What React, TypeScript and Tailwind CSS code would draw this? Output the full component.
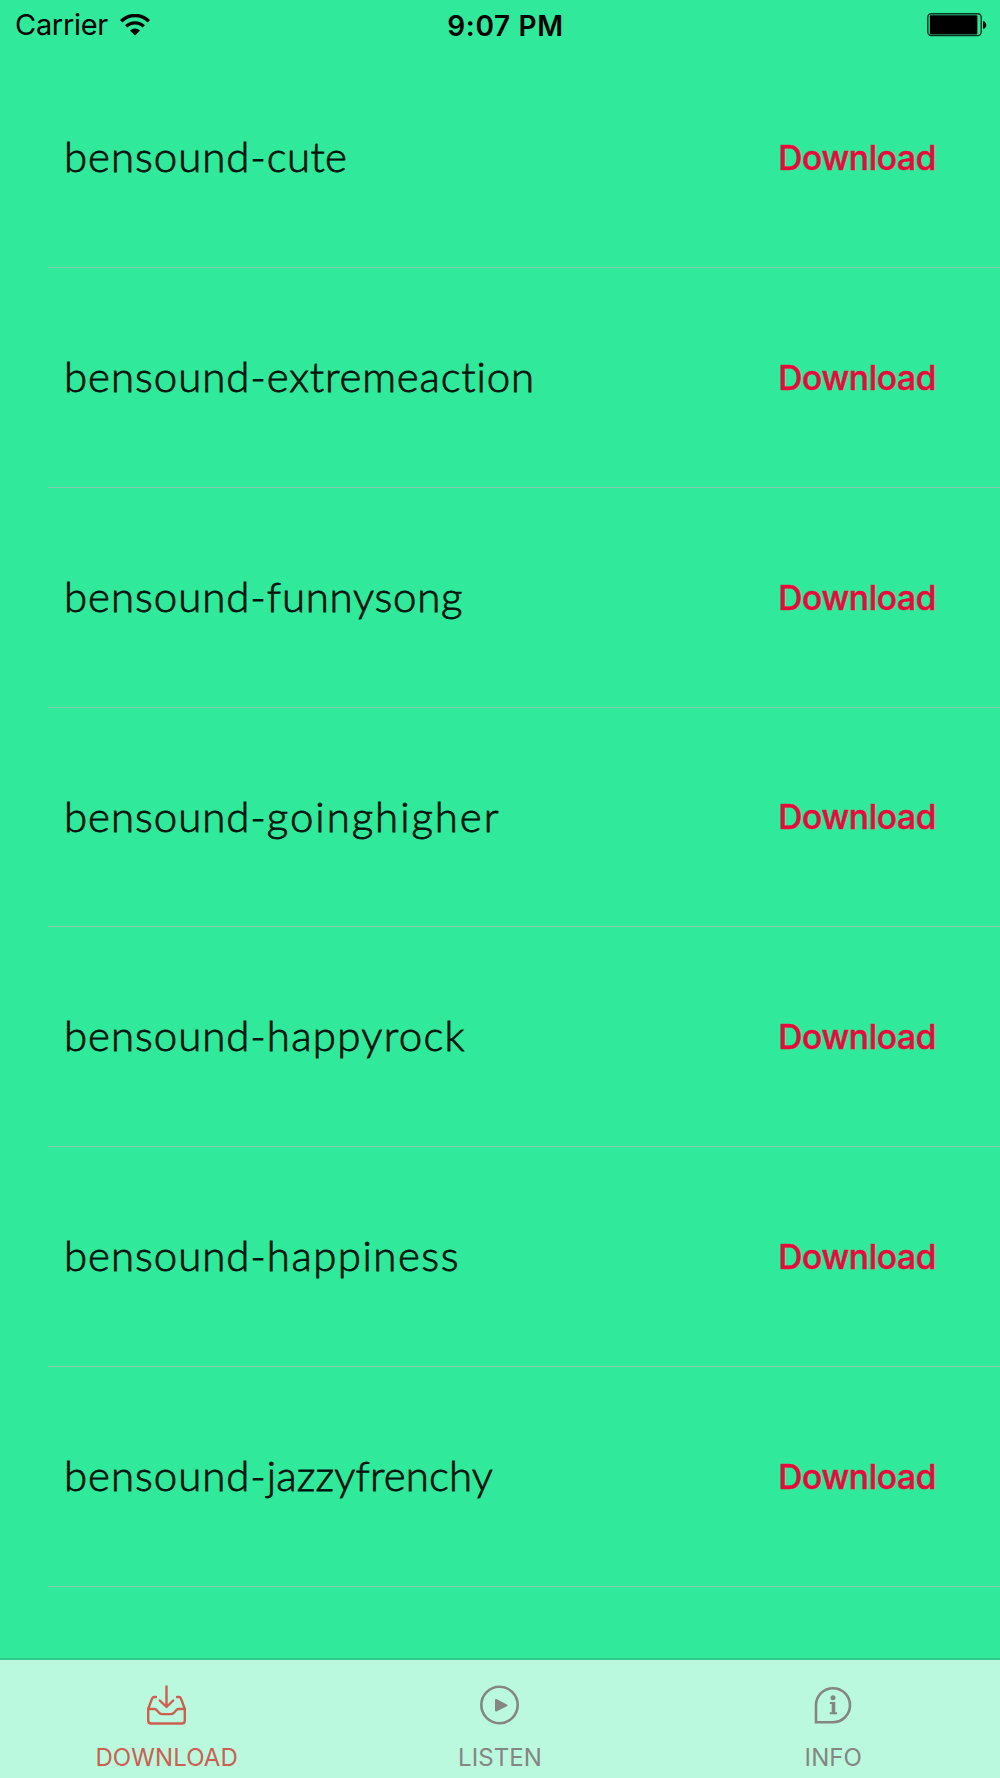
import React from 'react';

interface Song {
    title: string;
    spacing: string;
}

const songs: Song[] = [
    { title: 'cute', spacing: 'tracking-[0.35px]' },
    { title: 'extremeaction', spacing: 'tracking-[0.81px]' },
    { title: 'funnysong', spacing: 'tracking-[0.74px]' },
    { title: 'goinghigher', spacing: 'tracking-[1.95px]' },
    { title: 'happyrock', spacing: 'tracking-[1.3px]' },
    { title: 'happiness', spacing: 'tracking-[1.48px]' },
    { title: 'jazzyfrenchy', spacing: 'tracking-[0.14px]' },
];

const WifiIcon = () => (
    <svg className="w-[30px] h-[22px]" viewBox="0 0 30 22" fill="none" stroke="black">
        <path d="M1.2 7.2A19.5 19.5 0 0 1 28.8 7.2" strokeWidth={3.4} />
        <path d="M6.2 12.4A12.6 12.6 0 0 1 23.8 12.4" strokeWidth={3.2} />
        <path d="M10 16.6A7.2 7.2 0 0 1 20 16.6L15 21.6Z" fill="black" stroke="none" />
    </svg>
);

const BatteryIcon = () => (
    <svg className="w-[60px] h-[24px]" viewBox="0 0 60 24" fill="none">
        <rect x="0.8" y="0.8" width="53.4" height="21.8" rx="3.5" stroke="black" strokeOpacity={0.8} strokeWidth={1.4} />
        <rect x="2.8" y="2.2" width="47.6" height="19.2" rx="1" fill="black" />
        <path d="M56 8c2 .5 3.3 2 3.3 4S58 15.5 56 16z" fill="black" />
    </svg>
);

const StatusBar = () => (
    <header className="grid grid-cols-3 items-center h-12 pt-[2px] pl-[15px] pr-[13px] text-[29px] text-black">
        <div className="flex items-center gap-[12px]">
            <span className="tracking-[-0.3px]">Carrier</span>
            <WifiIcon />
        </div>
        <span className="pl-[9px] pt-[1px] text-center font-semibold text-[28px] tracking-[0.65px]">9:07 PM</span>
        <div className="flex justify-end">
            <BatteryIcon />
        </div>
    </header>
);

const SongRow = ({ title, spacing }: Song) => (
    <li className="ml-[48px] flex h-[219.86px] items-center justify-between border-b border-[#8fcaad] pl-[16px] pr-[64px]">
        <span className="pb-[2px] font-['Lato',sans-serif] font-light text-[42px] text-[#03130c] tracking-[0.95px] [-webkit-text-stroke:0.8px_#03130c]">
            bensound-<span className={spacing}>{title}</span>
        </span>
        <button className="pt-[1px] text-[33.5px] font-medium tracking-[-0.35px] text-[#e60b3c] [-webkit-text-stroke:0.5px_#e60b3c]">
            Download
        </button>
    </li>
);

const InboxIcon = () => (
    <svg className="w-[40px] h-[40px]" viewBox="0 0 40 40" fill="none" stroke="currentColor" strokeWidth={2.4} strokeLinecap="round" strokeLinejoin="round">
        <path d="M19.500 1.500V21M12.800 15.500l6.700 6.500 6.700-6.500" />
        <path d="M9 12H7q-1.400 0-2 1.700L1.200 24V35.500q0 3 3 3h30.600q3 0 3-3V24L34 13.700q-.6-1.700-2-1.700h-2" />
        <path d="M1.200 24H7.500q1.500 0 2.500 1.500l1.800 2q1.200 1.600 3.200 1.600h9q2 0 3.200-1.600l1.800-2q1-1.500 2.500-1.500h6.300" />
    </svg>
);

const PlayIcon = () => (
    <svg className="w-[40px] h-[40px]" viewBox="0 0 40 40" fill="none" stroke="currentColor">
        <circle cx="19.500" cy="20" r="18.2" strokeWidth={2.6} />
        <path d="M16 15v10.500l10.500-5.200z" fill="currentColor" strokeWidth={2} strokeLinejoin="round" />
    </svg>
);

const InfoIcon = () => (
    <svg className="w-[40px] h-[40px]" viewBox="0 0 40 40" fill="none" stroke="currentColor">
        <path d="M3 37.200V20.200A17 17 0 1 1 20 37.200Z" strokeWidth={2.6} />
        <circle cx="20" cy="12.800" r="2.500" fill="currentColor" stroke="none" />
        <path d="M16.800 17h5.500v10.300h1.800v2h-7.300v-2h1.900v-8.200h-1.900z" fill="currentColor" stroke="none" />
    </svg>
);

const tabs = [
    { label: 'DOWNLOAD', icon: <InboxIcon />, color: 'text-[#cb6051]' },
    { label: 'LISTEN', icon: <PlayIcon />, color: 'text-[#858582]' },
    { label: 'INFO', icon: <InfoIcon />, color: 'text-[#858582]' },
];

export default function App() {
    return (
        <div className="flex h-[1778px] w-[1000px] flex-col overflow-hidden bg-[#31e99b] font-['Inter',sans-serif]">
            <StatusBar />
            <ul className="flex-1">
                {songs.map((song) => (
                    <SongRow key={song.title} {...song} />
                ))}
            </ul>
            <nav className="grid h-[120px] grid-cols-3 border-t-2 border-[#35c98d] bg-[#bbf9df]">
                {tabs.map((tab) => (
                    <button key={tab.label} className={`flex flex-col items-center pt-[25px] ${tab.color}`}>
                        {tab.icon}
                        <span className="mt-[15px] text-[24px] leading-[36px] tracking-[0.1px]">{tab.label}</span>
                    </button>
                ))}
            </nav>
        </div>
    );
}
